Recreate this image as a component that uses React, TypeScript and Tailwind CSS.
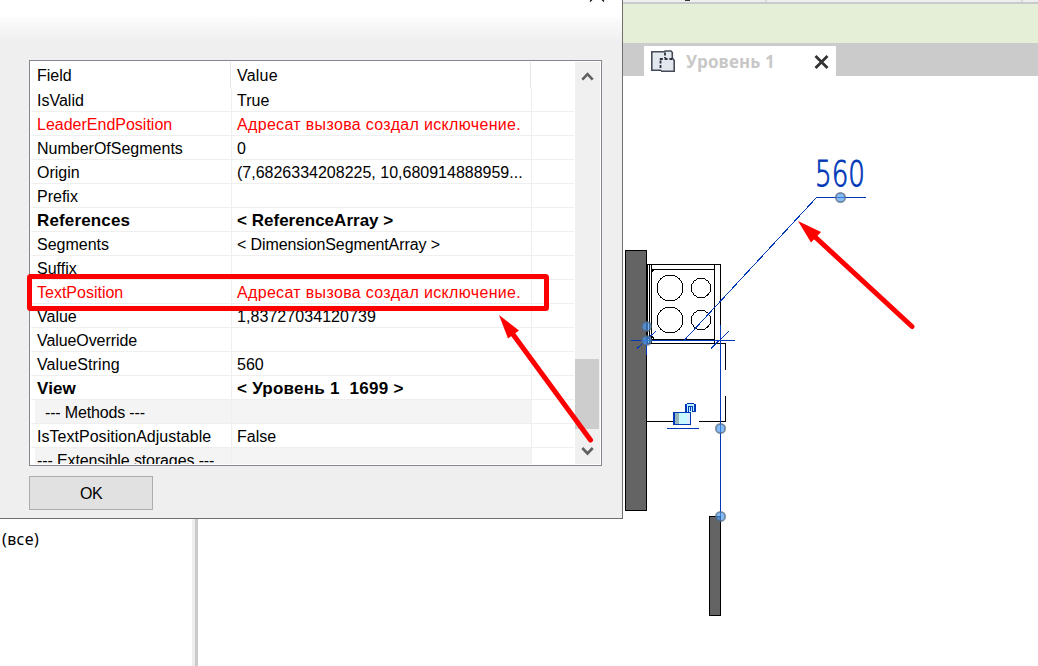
import React from "react";

type Row = {
  field: string;
  value?: string;
  kind?: "error" | "bold" | "group";
  indent?: boolean;
  fieldTracking?: string;
  valueTracking?: string;
};

const rows: Row[] = [
  { field: "IsValid", value: "True" },
  {
    field: "LeaderEndPosition",
    value: "Адресат вызова создал исключение.",
    kind: "error",
    valueTracking: "tracking-[0.33px]",
  },
  { field: "NumberOfSegments", value: "0" },
  { field: "Origin", value: "(7,6826334208225, 10,680914888959..." },
  { field: "Prefix" },
  {
    field: "References",
    value: "< ReferenceArray >",
    kind: "bold",
    fieldTracking: "tracking-[0.15px]",
    valueTracking: "tracking-[0.02px]",
  },
  { field: "Segments", value: "< DimensionSegmentArray >", valueTracking: "tracking-[-0.1px]" },
  { field: "Suffix" },
  {
    field: "TextPosition",
    value: "Адресат вызова создал исключение.",
    kind: "error",
    valueTracking: "tracking-[0.33px]",
  },
  { field: "Value", value: "1,83727034120739", valueTracking: "tracking-[0.06px]" },
  { field: "ValueOverride", fieldTracking: "tracking-[-0.08px]" },
  { field: "ValueString", value: "560", fieldTracking: "tracking-[0.1px]" },
  {
    field: "View",
    value: "< Уровень 1  1699 >",
    kind: "bold",
    fieldTracking: "tracking-[0.1px]",
    valueTracking: "tracking-[0.25px]",
  },
  { field: "--- Methods ---", kind: "group", indent: true, fieldTracking: "tracking-[-0.16px]" },
  { field: "IsTextPositionAdjustable", value: "False", fieldTracking: "tracking-[0.03px]" },
  { field: "--- Extensible storages ---", kind: "group", fieldTracking: "tracking-[-0.12px]" },
];

function FieldRow({ row }: { row: Row }) {
  const tone =
    row.kind === "error" ? "text-[#f00]" : row.kind === "bold" ? "text-[17px] font-bold text-black" : "text-black";
  const fill = row.kind === "group" ? "bg-[#f4f4f4]" : "bg-white";
  return (
    <div className={`flex h-6 shrink-0 border-b border-[#efefef] pl-1 leading-[26px] whitespace-pre ${tone}`}>
      <div
        className={`w-[197px] border-r border-[#efefef] ${row.indent ? "pl-[10px]" : "pl-[2px]"} ${fill} ${row.fieldTracking ?? ""}`}
      >
        {row.field}
      </div>
      <div className={`w-[300px] border-r border-[#efefef] pl-[5px] ${fill} ${row.valueTracking ?? ""}`}>
        {row.value}
      </div>
    </div>
  );
}

function Dialog() {
  return (
    <div className="flex h-[519px] w-[623px] shrink-0 flex-col border-r border-b border-[#707070] bg-[#efefef]">
      <div className="flex h-[17px] shrink-0 justify-end bg-white pr-[16px]">
        <svg width="18" height="3" viewBox="0 0 18 3">
          <path d="M2 1.5 L4.5 -1 M16 1.5 L13.5 -1" stroke="#111" strokeWidth="1.3" />
        </svg>
      </div>
      <div className="h-[25px] shrink-0 bg-linear-to-b from-[#fcfcfc] to-[#efefef]" />
      <div className="mt-[18px] ml-[29px] flex h-[406px] w-[573px] shrink-0 border border-[#828790] bg-white p-px">
        <div className="flex h-[402px] w-[543px] flex-col overflow-hidden">
          <div className="flex h-[26px] shrink-0 leading-[27px]">
            <div className="w-[200px] border-r border-[#e5e5e5] pl-[6px]">Field</div>
            <div className="w-[300px] border-r border-[#e5e5e5] pl-[6px] tracking-[0.2px]">Value</div>
          </div>
          {rows.map((row) => (
            <FieldRow key={row.field} row={row} />
          ))}
        </div>
        <div className="ml-px flex w-[25px] flex-col items-center bg-[#f0f0f0]">
          <svg width="25" height="297" viewBox="0 0 25 297" fill="none">
            <path d="M7.3 17.6 L12.5 12.1 L17.7 17.6" stroke="#606060" strokeWidth="2.6" />
          </svg>
          <div className="h-[70px] w-[25px] shrink-0 border-r border-[#f0f0f0] bg-[#cdcdcd]" />
          <svg width="25" height="35" viewBox="0 0 25 35" fill="none">
            <path d="M7.3 19 L12.5 24.5 L17.7 19" stroke="#606060" strokeWidth="2.6" />
          </svg>
        </div>
      </div>
      <button className="mt-[10px] ml-[29px] h-[34px] w-[124px] shrink-0 border border-[#adadad] bg-[#e1e1e1] pt-px text-center leading-[32px] tracking-[-0.5px]">
        OK
      </button>
    </div>
  );
}

function FloorPlanIcon() {
  return (
    <svg width="26" height="23" viewBox="0 0 26 23" fill="none">
      <path d="M1 1 H22 V8 L24 10 V21 H10 V20 H1 Z" fill="#e3e7ee" />
      <path
        d="M10 20.2 H1.8 V1.8 H14 L15.5 1 H21 L22.3 2.5 V8 L24.2 10.5 V21.2 H11"
        stroke="#454b58"
        strokeWidth="1.6"
      />
      <path d="M15 2.5 V8 M10.5 10.5 V21" stroke="#2c313c" strokeWidth="1.8" strokeDasharray="3 1.6" />
      <path d="M9.8 9 H23" stroke="#2c313c" strokeWidth="1.8" strokeDasharray="3 1.8" />
    </svg>
  );
}

function ViewTabs() {
  return (
    <div className="flex shrink-0 flex-col">
      <div className="flex h-[2px] bg-[#eeeeee]">
        <div className="ml-[62px] h-px w-[5px] bg-[#333]" />
        <div className="ml-[75px] h-[2px] w-[2px] bg-[#d9d9d9]" />
        <div className="ml-[254px] h-[2px] w-[2px] bg-[#d9d9d9]" />
      </div>
      <div className="h-[2px] bg-[#c9cacb]" />
      <div className="h-[39px] bg-[#e5efd7]" />
      <div className="flex h-[33px] items-end bg-[#cbcbcb] pl-[21px]">
        <div className="flex h-[30px] w-[192px] items-center bg-white pl-[6px]">
          <FloorPlanIcon />
          <span className="ml-[10px] w-[91px] pt-px font-['Noto_Sans',sans-serif] text-[17px] leading-none font-bold tracking-[0.15px] whitespace-nowrap text-[#c8c8c8]">
            Уровень 1
          </span>
          <svg className="mt-px ml-[37px]" width="15" height="14" viewBox="0 0 15 14">
            <path d="M1.5 1 L13.5 13 M13.5 1 L1.5 13" stroke="#333" strokeWidth="2.8" />
          </svg>
        </div>
      </div>
    </div>
  );
}

function Grip({ x, y }: { x: number; y: number }) {
  return (
    <circle cx={x} cy={y} r="4.7" fill="#4c9bf0" fillOpacity=".68" stroke="#53657a" strokeOpacity=".7" strokeWidth="1.7" />
  );
}

function Drawing() {
  return (
    <svg width="415" height="590" viewBox="623 76 415 590" fill="none">
      <g shapeRendering="crispEdges">
        <rect x="625.5" y="250.5" width="21" height="260" fill="#646464" stroke="#000" />
        <rect x="709.5" y="516.5" width="11" height="99" fill="#646464" stroke="#000" />
        <g stroke="#000">
          <path d="M647 264.5 H721 M720.5 264 V343 M647.5 264 V343 M649.5 264 V343 M651.5 264 V343 M714.5 264 V343 M652 269.5 H714 M652 339.5 H714" />
          <path d="M651.5 272 L654 269.5 M651.5 336 L654 338.5" />
          <path d="M647 343.5 H725.5 V370 M725.5 396 V421.5 H699 M647 421.5 H673 M646.5 355 V421" />
          <circle cx="670" cy="288" r="13" />
          <circle cx="670" cy="320" r="13" />
          <circle cx="701" cy="288" r="9.7" />
          <circle cx="701" cy="320" r="9.7" />
        </g>
        <g stroke="#0037b8">
          <path d="M631 340.5 H735 M720.5 325 V516 M646.5 340 V355 M667 428.5 H699 M816 197.5 H866" />
          <path d="M684.5 340 L816.5 197.5 M637 348.5 L656 331 M711 348.5 L729 331" />
        </g>
        <rect x="673" y="412" width="18" height="13" fill="#0037b8" />
        <rect x="675" y="413" width="15" height="11" fill="#c5f8ff" />
        <rect x="675" y="413" width="4" height="11" fill="#94b4bb" />
        <rect x="687" y="413" width="3" height="11" fill="#dcecff" />
        <rect x="685" y="404" width="2" height="8" fill="#0037b8" />
        <rect x="694" y="404" width="2" height="8" fill="#0037b8" />
        <rect x="687" y="403" width="7" height="1" fill="#0037b8" />
        <rect x="687" y="404" width="7" height="8" fill="#baf3ff" />
        <path d="M688.5 412 V406.5 H692.5 V411 M690.5 407 V411 M692 411.5 H695" stroke="#0037b8" />
      </g>
      <text
        x="815"
        y="186"
        textLength="50"
        lengthAdjust="spacingAndGlyphs"
        fill="#0037b8"
        stroke="#0037b8"
        strokeWidth="0.9"
        className="font-['DejaVu_Sans_Light','DejaVu_Sans',sans-serif] text-[35px] font-extralight"
      >
        560
      </text>
      <Grip x={840.5} y={197.5} />
      <Grip x={646.5} y={326.5} />
      <Grip x={646.5} y={340.5} />
      <Grip x={720.5} y={428.5} />
      <Grip x={720.5} y={516.5} />
    </svg>
  );
}

function Markup() {
  return (
    <svg className="pointer-events-none absolute inset-0" width="1038" height="666" viewBox="0 0 1038 666" fill="none">
      <rect x="29.5" y="276.5" width="517" height="32" rx="1" stroke="#f00" strokeWidth="5" />
      <g stroke="#f00" strokeWidth="5" strokeLinecap="round">
        <path d="M512 333 L590.5 440" />
        <path d="M813 235 L912 326.5" />
      </g>
      <path d="M499 315 L519 330.5 L508 338.5 Z M798 221 L821 232 L811 242.5 Z" fill="#f00" />
    </svg>
  );
}

export default function App() {
  return (
    <div className="relative flex h-[666px] w-[1038px] overflow-hidden bg-white font-['Liberation_Sans',sans-serif] text-[16px] text-black">
      <div className="flex w-[623px] shrink-0 flex-col">
        <Dialog />
        <div className="flex h-[147px]">
          <div className="w-[192px] pt-[8px] pl-[2px] font-['Noto_Sans',sans-serif] text-[16px] leading-[24px] tracking-[0.4px]">
            (все)
          </div>
          <div className="w-[3px] bg-[#eeeeee]" />
          <div className="w-[3px] bg-[#cacaca]" />
        </div>
      </div>
      <div className="flex w-[415px] shrink-0 flex-col">
        <ViewTabs />
        <Drawing />
      </div>
      <Markup />
    </div>
  );
}
